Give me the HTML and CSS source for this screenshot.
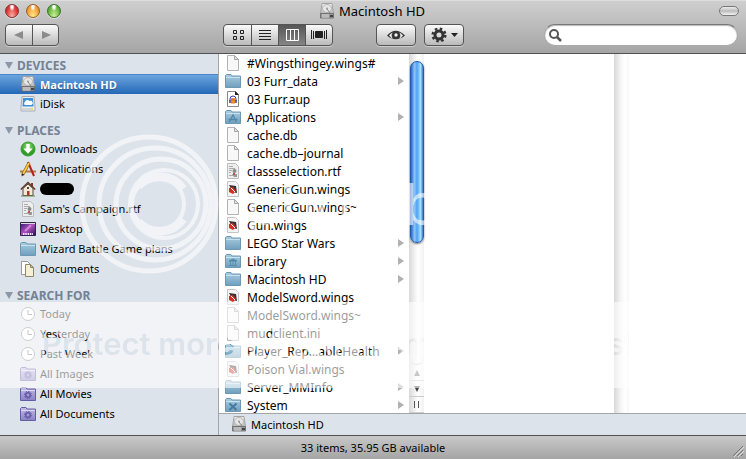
FILE: index.html
```html
<!DOCTYPE html>
<html lang="en">
<head>
<meta charset="utf-8">
<title>Macintosh HD</title>
<link rel="stylesheet" href="styles.css">
</head>
<body>
<svg class="defs" aria-hidden="true">
  <defs>
    <linearGradient id="blue" x2="0" y2="1"><stop stop-color="#a9cde0"/><stop offset="1" stop-color="#6f9fbe"/></linearGradient>
    <linearGradient id="violet" x2="0" y2="1"><stop stop-color="#c3bce6"/><stop offset="1" stop-color="#8b82c4"/></linearGradient>
    <linearGradient id="metal" x2="0" y2="1"><stop stop-color="#f2f2f2"/><stop offset="1" stop-color="#b8b8b8"/></linearGradient>
    <linearGradient id="sky" x2="1" y2="1"><stop stop-color="#2a1a6a"/><stop offset=".5" stop-color="#b04fc0"/><stop offset="1" stop-color="#241050"/></linearGradient>
    <radialGradient id="green" cy=".3"><stop stop-color="#8fe070"/><stop offset="1" stop-color="#2f9c26"/></radialGradient>
  </defs>
  <symbol id="hd" viewBox="0 0 16 16">
    <path d="M3 .5h10l1.500 10.500h-13z" fill="url(#metal)" stroke="#a2a2a2"/>
    <ellipse cx="8" cy="5.500" rx="4.500" ry="4" fill="#e6e6e6" stroke="#aaa" stroke-width=".8"/>
    <path d="M8 6l3 4" stroke="#888"/><circle cx="8" cy="5.500" r="1" fill="#999"/>
    <path d="M1.500 10.500h13v4.500h-13z" fill="#999" stroke="#666" stroke-width=".8"/>
    <path d="M3 12h7M3 14h7" stroke="#ddd"/><path d="M11 13h3" stroke="#444" stroke-width="2"/>
  </symbol>
  <symbol id="idisk" viewBox="0 0 16 16">
    <path d="M2 .5h12l1 10.500v4H1v-4z" fill="#eee" stroke="#aab"/>
    <path d="M3 2h10l.5 8.500h-11z" fill="#3d93d6"/>
    <path d="M5 9a1.700 1.700 0 010-3 2.500 2.500 0 014.500-1A2 2 0 0111.500 9z" fill="#fff"/>
    <path d="M2 13h9" stroke="#bbb"/><path d="M11 13h2" stroke="#dd3" stroke-width="1.500"/>
  </symbol>
  <symbol id="folder" viewBox="0 0 16 16">
    <path d="M.5 14.500v-12l1-1h4.500l1 1.500h8.500v11.500z" fill="url(#blue)" stroke="#6c98b3"/>
    <path d="M1 4.500h14" stroke="#c9e2ee"/>
  </symbol>
  <symbol id="folder-apps" viewBox="0 0 16 16">
    <use href="#folder"/><path d="M4.500 13L8 6l3.500 7M3.500 10.500h9" fill="none" stroke="#5286a8" stroke-width="1.300"/>
  </symbol>
  <symbol id="folder-library" viewBox="0 0 16 16">
    <use href="#folder"/><path d="M4 8l4-2 4 2zM4 12.500h8M5.500 8v4M8 8v4M10.500 8v4" fill="#5286a8" stroke="#5286a8" stroke-width=".8"/>
  </symbol>
  <symbol id="folder-system" viewBox="0 0 16 16">
    <use href="#folder"/><path d="M4.500 6.500l7 6.500M11.500 6.500l-7 6.500" stroke="#477b9d" stroke-width="2"/>
  </symbol>
  <symbol id="smart" viewBox="0 0 16 16">
    <path d="M.5 14.500v-12l1-1h4.500l1 1.500h8.500v11.500z" fill="url(#violet)" stroke="#655ca4"/>
    <path d="M1 4.500h14" stroke="#dcd8f2"/>
    <circle cx="8" cy="9" r="2.300" fill="none" stroke="#6259a5" stroke-width="1.500"/>
    <circle cx="8" cy="9" r="3.600" fill="none" stroke="#6259a5" stroke-dasharray="1.400 1.400"/>
  </symbol>
  <symbol id="file" viewBox="0 0 16 16">
    <path d="M2.500.5h7l4 4v11h-11z" fill="#f8f8f8" stroke="#b3b3b3"/><path d="M9.500.5v4h4z" fill="#e2e2e2" stroke="#a5a5a5"/>
  </symbol>
  <symbol id="audio" viewBox="0 0 16 16">
    <path d="M2.500.5h8l3 3v12h-11z" fill="#fff" stroke="#888"/><path d="M10 0l4 4h-4z" fill="#222"/>
    <path d="M5 10V8a3 3 0 016 0v2" fill="#fff" stroke="#2c3fae" stroke-width="1"/>
    <path d="M5 9v3M11 9v3" stroke="#2c3fae" stroke-width="1.500"/><path d="M6 10l1-3 1 3 1-3 1 3v2H6z" fill="#f3a21c" stroke="#dd5a20" stroke-width=".8"/>
  </symbol>
  <symbol id="wings" viewBox="0 0 16 16">
    <path d="M2.500.5h8l3 3v12h-11z" fill="#f4f4f4" stroke="#c4c4c4"/>
    <path d="M4 4l7 1 1 7-4-1z" fill="#333"/><path d="M4 7l4-1 3 4-3 3-4-2z" fill="#d32f26"/><path d="M6 7l4 4" stroke="#fff"/>
  </symbol>
  <symbol id="rtf" viewBox="0 0 16 16">
    <path d="M2.500.5h8l3 3v12h-11z" fill="#eee" stroke="#bbb"/>
    <path d="M4 3.500h4M4 5.500h6M4 7.500h3M4 9.500h2M4 12.500h4" stroke="#aaa"/>
    <circle cx="9.500" cy="8" r="2" fill="#888"/><path d="M7 11h5v3H9z" fill="#999"/><path d="M8 10h2v2H8z" fill="#b55"/>
  </symbol>
  <symbol id="download" viewBox="0 0 16 16">
    <circle cx="8" cy="8" r="7" fill="url(#green)" stroke="#3a9b32"/><path d="M6.300 3h3.400v4.500h3L8 12.800 3.300 7.500h3z" fill="#fff"/>
  </symbol>
  <symbol id="apps" viewBox="0 0 16 16">
    <path d="M0 10.500h16" stroke="#b5784a" stroke-width="2"/>
    <path d="M8 1l6 14" stroke="#b5221d" stroke-width="2"/><path d="M9 2L2.500 14" stroke="#8f5b16" stroke-width="3"/>
    <path d="M9 2L3 13" stroke="#f2cb3e" stroke-width="1.800"/><path d="M1.500 15.500l.5-3 2 1z" fill="#222"/>
  </symbol>
  <symbol id="home" viewBox="0 0 16 16">
    <path d="M11 2h2v4h-2z" fill="#8f3422"/><path d="M3 7.500L8 3l5 4.500v7H3z" fill="#f2e9d8" stroke="#59453a"/>
    <path d="M.8 8.500L8 1.500l7.200 7" fill="none" stroke="#5f3b2d" stroke-width="1.500"/>
    <path d="M7 10h2.500v4.500H7z" fill="#a23b22"/><path d="M7 6h2v2H7z" fill="#444"/><path d="M1 15h14" stroke="#6c8752"/>
  </symbol>
  <symbol id="desktop" viewBox="0 0 16 16">
    <path d="M.5 1.500h15v13H.5z" fill="url(#sky)" stroke="#34204f"/><path d="M1 2.500h14" stroke="#ddd"/>
    <path d="M3 13h10" stroke="#eef" stroke-width="2" stroke-dasharray="1.500 .8"/><path d="M5 10l6-6" stroke="#e99ae8" stroke-width="2" opacity=".7"/>
  </symbol>
  <symbol id="documents" viewBox="0 0 16 16">
    <path d="M1.500.5h6l3 3v10h-9z" fill="#fff" stroke="#999"/><path d="M5.500 3.500h5l3 3v9h-8z" fill="#f4efd6" stroke="#8e8869"/>
    <path d="M10.500 3.500v3h3z" fill="#ccc397" stroke="#8e8869"/>
  </symbol>
  <symbol id="clock" viewBox="0 0 16 16">
    <circle cx="8" cy="8" r="6.500" fill="#fff" stroke="#858585"/><path d="M8 4v4.500h4" fill="none" stroke="#777"/>
  </symbol>
</svg>

<main class="window">
  <header class="chrome">
    <div class="titlebar">
      <div class="lights">
        <button class="light red" aria-label="Close"></button>
        <button class="light amber" aria-label="Minimize"></button>
        <button class="light lime" aria-label="Zoom"></button>
      </div>
      <h1 class="title"><svg class="icon"><use href="#hd"/></svg>Macintosh HD</h1>
      <button class="pill" aria-label="Toggle toolbar"></button>
    </div>
    <div class="toolbar">
      <div class="history">
        <div class="segments">
          <button aria-label="Back"><svg width="10" height="10"><path d="M0 5l9-4v8z" fill="#8b8b8b"/></svg></button>
          <button aria-label="Forward"><svg width="10" height="10"><path d="M10 5L1 1v8z" fill="#8b8b8b"/></svg></button>
        </div>
      </div>
      <div class="segments views">
        <button aria-label="Icon view"><svg width="12" height="12" fill="none" stroke="#222"><path d="M1.500 1.500h3v3h-3zM8.500 1.500h3v3h-3zM1.500 7.500h3v3h-3zM8.500 7.500h3v3h-3z"/></svg></button>
        <button aria-label="List view"><svg width="12" height="12" stroke="#222"><path d="M0 1.500h12M0 4.500h12M0 7.500h12M0 10.500h12"/></svg></button>
        <button class="pressed" aria-label="Column view"><svg width="13" height="12" fill="none" stroke="#fff"><path d="M.5.5h12v11H.5zM4.500 0v12M8.500 0v12"/></svg></button>
        <button aria-label="Cover Flow view"><svg width="16" height="10" stroke="#222"><path d="M.5 0v9M2.500 1v8M13.500 1v8M15.500 0v9"/><path d="M4.500 1.500h7v6h-7z" fill="#222"/></svg></button>
      </div>
      <button class="tool eye" aria-label="Quick Look"><svg width="20" height="12"><path d="M1 6.500Q9.500-3 19 6.500 9.500 14 1 6.500z" fill="#333"/><path d="M3 6.500Q5 4 7 3.500a4 4 0 000 6Q5 9 3 6.500zM17 6.500q-2-2.500-4-3a4 4 0 010 6q2-.5 4-3z" fill="#eee"/><circle cx="10" cy="6" r="1.700" fill="#eee"/></svg></button>
      <button class="tool gear" aria-label="Action"><svg width="27" height="16"><circle cx="8" cy="8" r="4" fill="none" stroke="#333" stroke-width="3"/><circle cx="8" cy="8" r="6.300" fill="none" stroke="#333" stroke-width="2.500" stroke-dasharray="2.500 2.448"/><path d="M20 6h7l-3.500 4z" fill="#222"/></svg></button>
      <label class="search"><svg width="14" height="14" fill="none" stroke="#555" stroke-width="2"><circle cx="5" cy="6" r="4"/><path d="M8 9l4 4" stroke-width="2.500"/></svg><input type="search" aria-label="Search"></label>
    </div>
  </header>

  <div class="body">
    <nav class="sidebar">
      <section>
        <h2>DEVICES</h2>
        <a href="#" class="selected"><svg class="icon"><use href="#hd"/></svg>Macintosh HD</a>
        <a href="#"><svg class="icon"><use href="#idisk"/></svg>iDisk</a>
      </section>
      <section>
        <h2>PLACES</h2>
        <a href="#"><svg class="icon"><use href="#download"/></svg>Downloads</a>
        <a href="#"><svg class="icon"><use href="#apps"/></svg>Applications</a>
        <a href="#" aria-label="Home"><svg class="icon"><use href="#home"/></svg><span class="redacted"></span></a>
        <a href="#"><svg class="icon"><use href="#rtf"/></svg>Sam's Campaign.rtf</a>
        <a href="#"><svg class="icon"><use href="#desktop"/></svg>Desktop</a>
        <a href="#"><svg class="icon"><use href="#folder"/></svg>Wizard Battle Game plans</a>
        <a href="#"><svg class="icon"><use href="#documents"/></svg>Documents</a>
      </section>
      <section>
        <h2>SEARCH FOR</h2>
        <a href="#"><svg class="icon"><use href="#clock"/></svg>Today</a>
        <a href="#"><svg class="icon"><use href="#clock"/></svg>Yesterday</a>
        <a href="#"><svg class="icon"><use href="#clock"/></svg>Past Week</a>
        <a href="#"><svg class="icon"><use href="#smart"/></svg>All Images</a>
        <a href="#"><svg class="icon"><use href="#smart"/></svg>All Movies</a>
        <a href="#"><svg class="icon"><use href="#smart"/></svg>All Documents</a>
      </section>
    </nav>

    <div class="browser">
      <div class="columns">
        <div class="files">
          <a href="#"><svg class="icon"><use href="#file"/></svg>#Wingsthingey.wings#</a>
          <a href="#" class="dir"><svg class="icon"><use href="#folder"/></svg>03 Furr_data</a>
          <a href="#"><svg class="icon"><use href="#audio"/></svg>03 Furr.aup</a>
          <a href="#" class="dir"><svg class="icon"><use href="#folder-apps"/></svg>Applications</a>
          <a href="#"><svg class="icon"><use href="#file"/></svg>cache.db</a>
          <a href="#"><svg class="icon"><use href="#file"/></svg>cache.db–journal</a>
          <a href="#"><svg class="icon"><use href="#rtf"/></svg>classselection.rtf</a>
          <a href="#"><svg class="icon"><use href="#wings"/></svg>GenericGun.wings</a>
          <a href="#"><svg class="icon"><use href="#file"/></svg>GenericGun.wings~</a>
          <a href="#"><svg class="icon"><use href="#wings"/></svg>Gun.wings</a>
          <a href="#" class="dir"><svg class="icon"><use href="#folder"/></svg>LEGO Star Wars</a>
          <a href="#" class="dir"><svg class="icon"><use href="#folder-library"/></svg>Library</a>
          <a href="#" class="dir"><svg class="icon"><use href="#folder"/></svg>Macintosh HD</a>
          <a href="#"><svg class="icon"><use href="#wings"/></svg>ModelSword.wings</a>
          <a href="#"><svg class="icon"><use href="#file"/></svg>ModelSword.wings~</a>
          <a href="#"><svg class="icon"><use href="#file"/></svg>mudclient.ini</a>
          <a href="#" class="dir"><svg class="icon"><use href="#folder"/></svg>Player_Rep…ableHealth</a>
          <a href="#"><svg class="icon"><use href="#wings"/></svg>Poison Vial.wings</a>
          <a href="#" class="dir"><svg class="icon"><use href="#folder"/></svg>Server_MMInfo</a>
          <a href="#" class="dir"><svg class="icon"><use href="#folder-system"/></svg>System</a>
        </div>
        <div class="scrollbar">
          <div class="track"><div class="thumb"></div></div>
          <button aria-label="Scroll up"><svg width="6" height="6"><path d="M0 6h6L3 0z" fill="#777"/></svg></button>
          <button aria-label="Scroll down"><svg width="6" height="6"><path d="M0 0h6L3 6z" fill="#444"/></svg></button>
          <button aria-label="Resize column"><svg width="5" height="7"><path d="M.5 0v7M4.500 0v7" stroke="#555"/></svg></button>
        </div>
        <div class="column"></div>
        <div class="empty-track"></div>
      </div>
      <div class="path"><svg class="icon"><use href="#hd"/></svg>Macintosh HD</div>
    </div>
  </div>

  <footer class="status">33 items, 35.95 GB available
    <svg class="grip" width="12" height="12" stroke="#777"><path d="M1 11L11 1M5 11l6-6M9 11l2-2"/><path d="M2 12L12 2M6 12l6-6" stroke="#ddd"/></svg>
  </footer>

  <svg class="watermark" aria-hidden="true">
    <mask id="knockout">
      <rect width="100%" height="100%" fill="#fff"/>
      <text class="slogan" x="42" y="355">Protect more of your memories for less!</text>
    </mask>
    <rect y="302" width="100%" height="86" fill="#fff" mask="url(#knockout)"/>
    <g fill="none" stroke="#fff">
      <circle cx="149" cy="204" r="67" stroke-width="5"/>
      <circle cx="155" cy="204" r="56" stroke-width="5"/>
      <circle cx="161" cy="204" r="45" stroke-width="5"/>
      <circle cx="164" cy="204" r="34" stroke-width="4"/>
      <path d="M138 186a29 29 0 0145 3M138 222a29 29 0 0045-3" stroke-width="9"/>
      <circle cx="158" cy="204" r="26" stroke-width="4"/>
    </g>
    <text class="brand" x="246" y="225">photobucket</text>
  </svg>
</main>
</body>
</html>
```
FILE: styles.css
```css
* { box-sizing: border-box; }
body { margin: 0; font: 12px "Noto Sans", "Open Sans", sans-serif; color: #000; }
a { color: inherit; text-decoration: none; }
button { padding: 0; border: 0; background: none; font: inherit; }
h1, h2 { margin: 0; }
.defs { position: absolute; width: 0; height: 0; }
.icon { flex: none; width: 16px; height: 16px; }

.window { position: relative; display: flex; flex-direction: column; min-height: 100vh; overflow: hidden; }

.chrome { border-top: 1px solid #ddd; border-bottom: 1px solid #515151; background: linear-gradient(#cfcfcf, #a5a5a5); }
.titlebar { display: grid; grid-template-columns: 1fr auto 1fr; align-items: center; height: 20px; padding: 0 7px 0 5px; }
.lights { display: flex; gap: 7px; }
.light { width: 14px; height: 14px; border: 1px solid #666; border-radius: 50%; box-shadow: 0 1px 0 #ddd; }
.red { border-color: #87312f; background: radial-gradient(ellipse at 50% 12%, #fff 0 12%, transparent 32%), radial-gradient(at 50% 100%, #ffb6ae, #dc3a38 65%, #a91d20); }
.amber { border-color: #a05c20; background: radial-gradient(ellipse at 50% 12%, #fff 0 12%, transparent 32%), radial-gradient(at 50% 100%, #fff08a, #f3a13b 65%, #c66a1b); }
.lime { border-color: #3c702b; background: radial-gradient(ellipse at 50% 12%, #fff 0 12%, transparent 32%), radial-gradient(at 50% 100%, #d5f59a, #6bb746 65%, #3c8528); }
.title { display: flex; align-items: center; gap: 4px; font-size: 13px; font-weight: 400; line-height: 20px; }
.pill { justify-self: end; width: 20px; height: 10px; border: 1px solid #777; border-radius: 5px; background: linear-gradient(#eee, #bbb 50%, #f4f4f4); }

.toolbar { display: flex; align-items: center; height: 32px; padding: 0 8px 4px 5px; }
.history { flex: 0 0 218px; }
.segments { display: inline-flex; height: 22px; border: 1px solid #555; border-radius: 4px; overflow: hidden; background: linear-gradient(#fbfbfb, #bababa); box-shadow: 0 1px 0 #ccc; }
.segments button { display: grid; place-items: center; width: 26px; }
.segments button + button { border-left: 1px solid #555; }
.views button { width: 27px; }
.segments .pressed { background: linear-gradient(#565656, #858585); }
.tool { display: grid; place-items: center; width: 40px; height: 22px; border: 1px solid #555; border-radius: 4px; background: linear-gradient(#fbfbfb, #bababa); box-shadow: 0 1px 0 #ccc; }
.eye { margin-left: 43px; }
.gear { margin-left: 8px; }
.search { display: flex; align-items: center; width: 194px; height: 22px; margin-left: auto; padding-left: 4px; border: 1px solid #aaa; border-top-color: #777; border-radius: 11px; background: #fff; box-shadow: inset 0 1px 1px #bbb; }
.search input { flex: 1; min-width: 0; border: 0; outline: 0; background: none; font: inherit; }

.body { display: flex; flex: 1; }
.sidebar { flex: 0 0 219px; display: flex; flex-direction: column; gap: 8px; padding: 3px 0; border-right: 1px solid #a5a5a5; background: #dce3eb; font-size: 11px; }
.sidebar h2 { display: flex; align-items: center; gap: 4px; height: 17px; padding-left: 5px; color: #748294; font-size: 12px; line-height: 17px; }
.sidebar h2::before { content: ""; border: 4px solid transparent; border-top: 7px solid #8c98a5; border-bottom: 0; }
.sidebar a { display: flex; align-items: center; gap: 4px; height: 20px; padding: 0 0 1px 20px; white-space: nowrap; }
.sidebar .selected { border-top: 1px solid #4a86c6; background: linear-gradient(#6ba5df, #2468b7); color: #fff; font-weight: 700; text-shadow: 0 1px 1px #2a568c; }
.redacted { width: 34px; height: 12px; border-radius: 6px; background: #000; }

.browser { flex: 1; min-width: 0; display: flex; flex-direction: column; background: #fff; }
.columns { flex: 1; display: flex; }
.files { flex: 0 0 190px; margin-bottom: -1px; }
.files a { display: flex; align-items: center; gap: 6px; height: 18px; padding: 0 5px 0 6px; white-space: nowrap; }
.dir::after { content: ""; margin-left: auto; border: 4px solid transparent; border-left: 6px solid #b1b1b1; border-right: 0; }
.scrollbar { flex: 0 0 15px; display: flex; flex-direction: column; background: linear-gradient(90deg, #d9d9d9, #fff 60%, #f2f2f2); }
.track { flex: 1; padding-top: 7px; border-bottom: 1px solid #ccc; border-radius: 0 0 8px 8px; }
.thumb { height: 60%; margin-left: 1px; border: 1px solid #2359ad; border-radius: 7px; background: linear-gradient(90deg, #246ad0, #8cc5fb 30%, #4fa2f2 50%, #a6e0ff 80%, #3977c8); box-shadow: 0 1px 2px #777; }
.scrollbar button { display: grid; place-items: center; height: 16px; border-bottom: 1px solid #ccc; }
.column { flex: 1; }
.empty-track { flex: 0 0 15px; margin-right: 117px; background: linear-gradient(90deg, #d8d8d8, #f5f5f5 45%, #fff 75%, #f7f7f7); }
.path { position: relative; display: flex; align-items: center; gap: 4px; height: 22px; padding: 0 0 1px 12px; border-top: 1px solid #a5a5a5; background: #dce3eb; font-size: 11px; }

.status { display: flex; justify-content: center; align-items: center; position: relative; height: 24px; border-top: 1px solid #515151; background: linear-gradient(#c8c8c8, #a5a5a5); font-size: 11px; }
.grip { position: absolute; right: 2px; bottom: 2px; }

.watermark { position: absolute; inset: 0; width: 100%; height: 100%; opacity: .6; pointer-events: none; }
.slogan { font: 600 31px "Inter", sans-serif; fill: #000; }
.brand { font: 400 58px "Inter", sans-serif; fill: #fff; }
```
